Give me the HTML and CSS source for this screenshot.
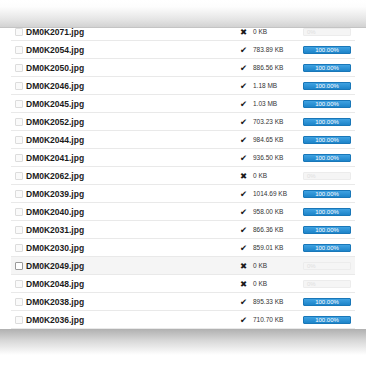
FILE: index.html
```html
<!DOCTYPE html>
<html lang="en">
<head>
    <meta charset="UTF-8">
    <title>Uploads</title>
    <link rel="stylesheet" href="styles.css">
</head>
<body>
    <div class="topbar"></div>
    <div class="files">
        <div class="row"><span class="box"></span><span class="name">DM0K2071.jpg</span><span class="mark">&#x2716;</span><span class="size">0 KB</span><span class="bar empty">0%</span></div>
        <div class="row"><span class="box"></span><span class="name">DM0K2054.jpg</span><span class="mark">&#x2714;</span><span class="size">783.89 KB</span><span class="bar">100.00%</span></div>
        <div class="row"><span class="box"></span><span class="name">DM0K2050.jpg</span><span class="mark">&#x2714;</span><span class="size">886.56 KB</span><span class="bar">100.00%</span></div>
        <div class="row"><span class="box"></span><span class="name">DM0K2046.jpg</span><span class="mark">&#x2714;</span><span class="size">1.18 MB</span><span class="bar">100.00%</span></div>
        <div class="row"><span class="box"></span><span class="name">DM0K2045.jpg</span><span class="mark">&#x2714;</span><span class="size">1.03 MB</span><span class="bar">100.00%</span></div>
        <div class="row"><span class="box"></span><span class="name">DM0K2052.jpg</span><span class="mark">&#x2714;</span><span class="size">703.23 KB</span><span class="bar">100.00%</span></div>
        <div class="row"><span class="box"></span><span class="name">DM0K2044.jpg</span><span class="mark">&#x2714;</span><span class="size">984.65 KB</span><span class="bar">100.00%</span></div>
        <div class="row"><span class="box"></span><span class="name">DM0K2041.jpg</span><span class="mark">&#x2714;</span><span class="size">936.50 KB</span><span class="bar">100.00%</span></div>
        <div class="row"><span class="box"></span><span class="name">DM0K2062.jpg</span><span class="mark">&#x2716;</span><span class="size">0 KB</span><span class="bar empty">0%</span></div>
        <div class="row"><span class="box"></span><span class="name">DM0K2039.jpg</span><span class="mark">&#x2714;</span><span class="size">1014.69 KB</span><span class="bar">100.00%</span></div>
        <div class="row"><span class="box"></span><span class="name">DM0K2040.jpg</span><span class="mark">&#x2714;</span><span class="size">958.00 KB</span><span class="bar">100.00%</span></div>
        <div class="row"><span class="box"></span><span class="name">DM0K2031.jpg</span><span class="mark">&#x2714;</span><span class="size">866.36 KB</span><span class="bar">100.00%</span></div>
        <div class="row"><span class="box"></span><span class="name">DM0K2030.jpg</span><span class="mark">&#x2714;</span><span class="size">859.01 KB</span><span class="bar">100.00%</span></div>
        <div class="row hover"><span class="box"></span><span class="name">DM0K2049.jpg</span><span class="mark">&#x2716;</span><span class="size">0 KB</span><span class="bar empty">0%</span></div>
        <div class="row"><span class="box"></span><span class="name">DM0K2048.jpg</span><span class="mark">&#x2716;</span><span class="size">0 KB</span><span class="bar empty">0%</span></div>
        <div class="row"><span class="box"></span><span class="name">DM0K2038.jpg</span><span class="mark">&#x2714;</span><span class="size">895.33 KB</span><span class="bar">100.00%</span></div>
        <div class="row"><span class="box"></span><span class="name">DM0K2036.jpg</span><span class="mark">&#x2714;</span><span class="size">710.70 KB</span><span class="bar">100.00%</span></div>
    </div>
    <div class="shade"></div>
</body>
</html>
```
FILE: styles.css
```css
body {
    margin: 0;
    background: #fff;
    font-family: "Liberation Sans", Arial, sans-serif;
    color: #222;
    overflow: hidden;
}
.topbar {
    position: relative;
    z-index: 1;
    height: 28px;
    background: linear-gradient(to bottom, #fff 0%, #fdfdfd 25%, #e6e6e6 70%, #d2d2d2 100%);
    border-bottom: 1px solid #c4c4c4;
    box-sizing: border-box;
}
.files {
    margin-top: -5px;
}
.row {
    display: grid;
    grid-template-columns: 11px 214px 13px 50px 48px;
    align-items: center;
    height: 18px;
    margin: 0 11px;
    padding: 0 4px;
    border-bottom: 1px solid #e9e9e9;
    box-sizing: border-box;
}
.row.hover {
    background: #f5f5f5;
}
.box {
    width: 8px;
    height: 8px;
    border: 1px solid #dcdcdc;
    border-radius: 1px;
    background: #fafafa;
    box-sizing: border-box;
}
.hover .box {
    border-color: #9a9a9a;
    background: #fff;
}
.name {
    font-size: 8.5px;
    font-weight: bold;
    color: #1a1a1a;
}
.mark {
    font-size: 8.5px;
    color: #1a1a1a;
    font-family: "DejaVu Sans", sans-serif;
}
.size {
    font-size: 6.5px;
    color: #333;
}
.bar {
    height: 8px;
    text-align: center;
    font-size: 6px;
    line-height: 6px;
    color: #fff;
    background: linear-gradient(to bottom, #3fa2e2, #1d84c9);
    border: 1px solid #1977b8;
    border-radius: 1px;
    box-sizing: border-box;
}
.bar.empty {
    background: #f5f5f5;
    border-color: #ececec;
    color: #e0e0e0;
    text-align: left;
    padding-left: 3px;
}
.shade {
    height: 26px;
    background: linear-gradient(to bottom, #b0b0b0 0%, #d8d8d8 45%, #fff 100%);
}
```
